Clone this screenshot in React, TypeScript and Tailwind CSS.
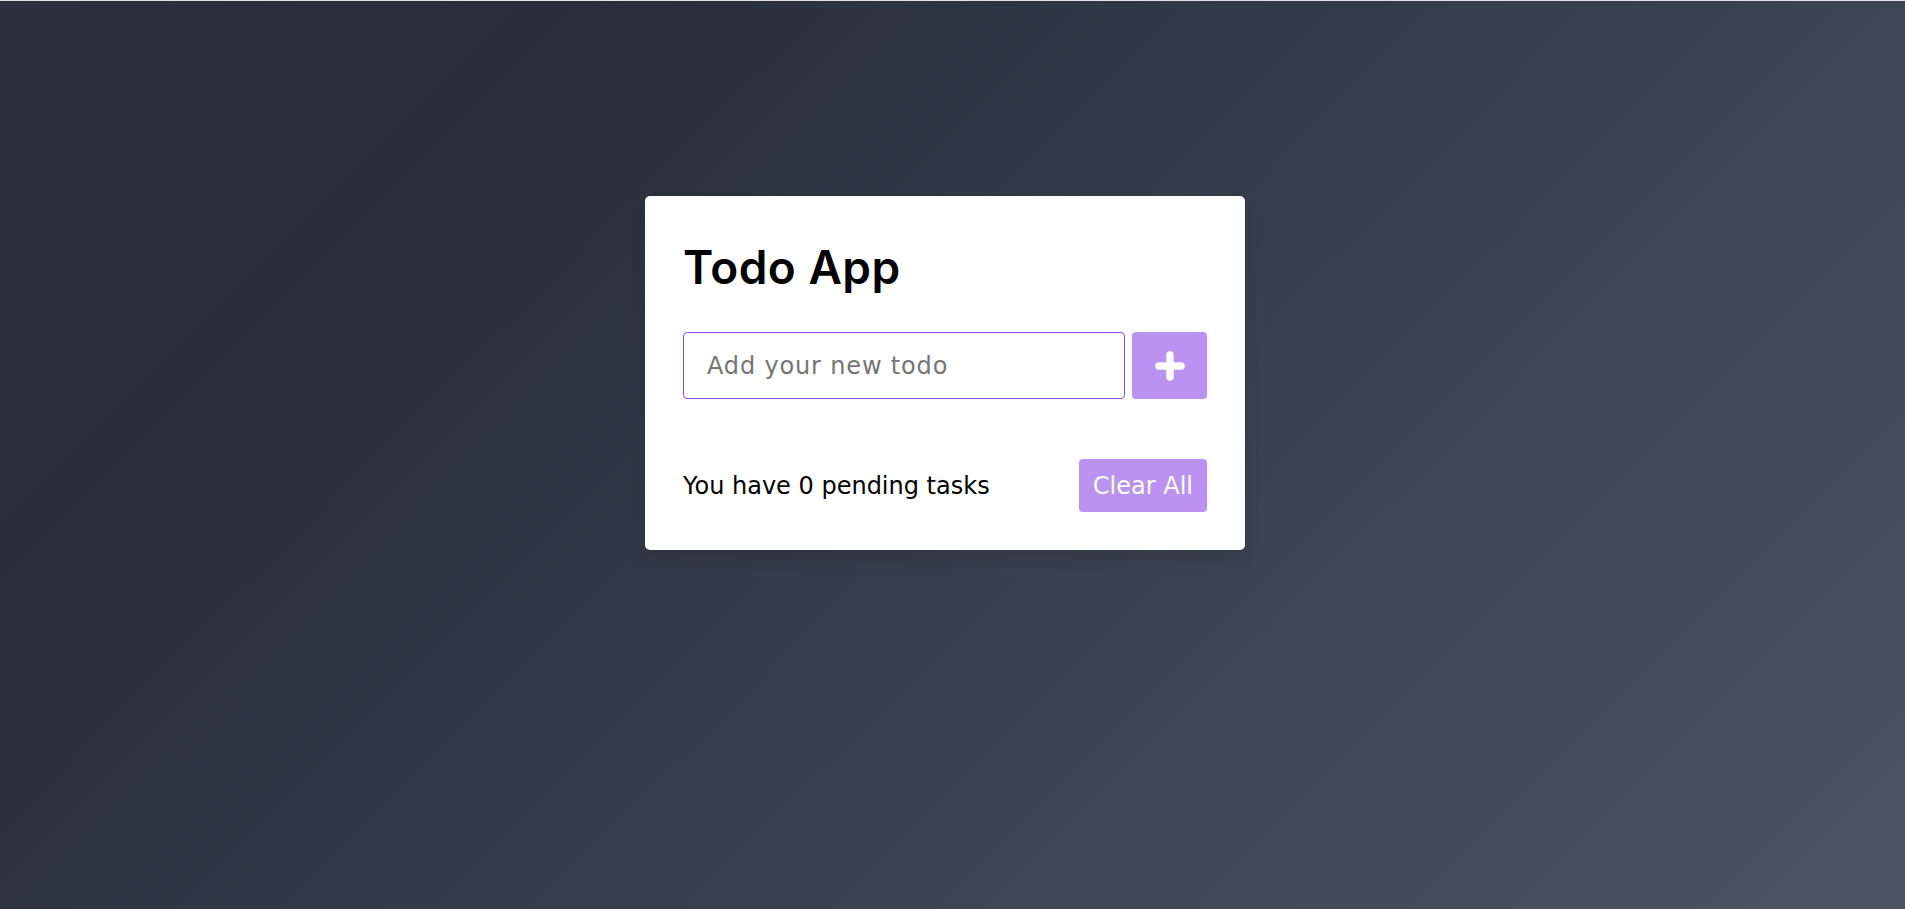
import React, { useState } from 'react';

export default function App() {
  const [todo, setTodo] = useState('');
  const [todos, setTodos] = useState<string[]>([]);

  function addTodo() {
    if (!todo.trim()) return;
    setTodos([...todos, todo.trim()]);
    setTodo('');
  }

  const empty = todo.trim() === '';

  return (
    <div
      className="min-h-screen w-full border-t border-[#e3e3e3] bg-[linear-gradient(135deg,#2b313d_0%,#272e3a_20%,#4b5563_100%)] pt-[195px] pr-[15px] flex justify-center items-start"
      style={{ fontFamily: '"DejaVu Sans", Inter, sans-serif' }}
    >
      <div className="w-[600px] bg-white rounded-[5px] px-[38px] pt-[48px] pb-[38px] shadow-[0_10px_15px_rgba(0,0,0,0.1)]">
        <h1
          className="text-[46px] leading-none font-semibold text-black tracking-[0.01em]"
          style={{ fontFamily: 'Inter, sans-serif' }}
        >
          Todo App
        </h1>

        <div className="mt-[42px] flex gap-[7px] h-[67px]">
          <input
            value={todo}
            onChange={(e) => setTodo(e.target.value)}
            placeholder="Add your new todo"
            className="flex-1 min-w-0 h-full border border-[#8e49e8] rounded-[4px] pl-[23px] pr-3 text-[24px] tracking-[0.035em] text-black placeholder:text-[#757575] outline-none"
          />
          <button
            onClick={addTodo}
            disabled={empty}
            className="w-[75px] h-full rounded-[4px] bg-[#8e49e8] disabled:opacity-60 flex items-center justify-center"
          >
            <svg width="30" height="30" viewBox="0 0 30 30" aria-hidden="true">
              <path d="M15 4v22M4 15h22" stroke="#fff" strokeWidth={7.5} strokeLinecap="round" />
            </svg>
          </button>
        </div>

        {todos.length > 0 && (
          <ul className="mt-4 flex flex-col gap-2">
            {todos.map((t, i) => (
              <li key={i} className="bg-[#f2f2f2] rounded-[3px] px-4 py-2 text-[20px]">
                {t}
              </li>
            ))}
          </ul>
        )}

        <div className="mt-[60px] flex items-center justify-between">
          <span className="text-[24px] leading-none text-black">You have {todos.length} pending tasks</span>
          <button
            onClick={() => setTodos([])}
            disabled={todos.length === 0}
            className="h-[53px] px-[14px] rounded-[4px] bg-[#8e49e8] disabled:opacity-60 text-white text-[24px] leading-none"
          >
            Clear All
          </button>
        </div>
      </div>
    </div>
  );
}
